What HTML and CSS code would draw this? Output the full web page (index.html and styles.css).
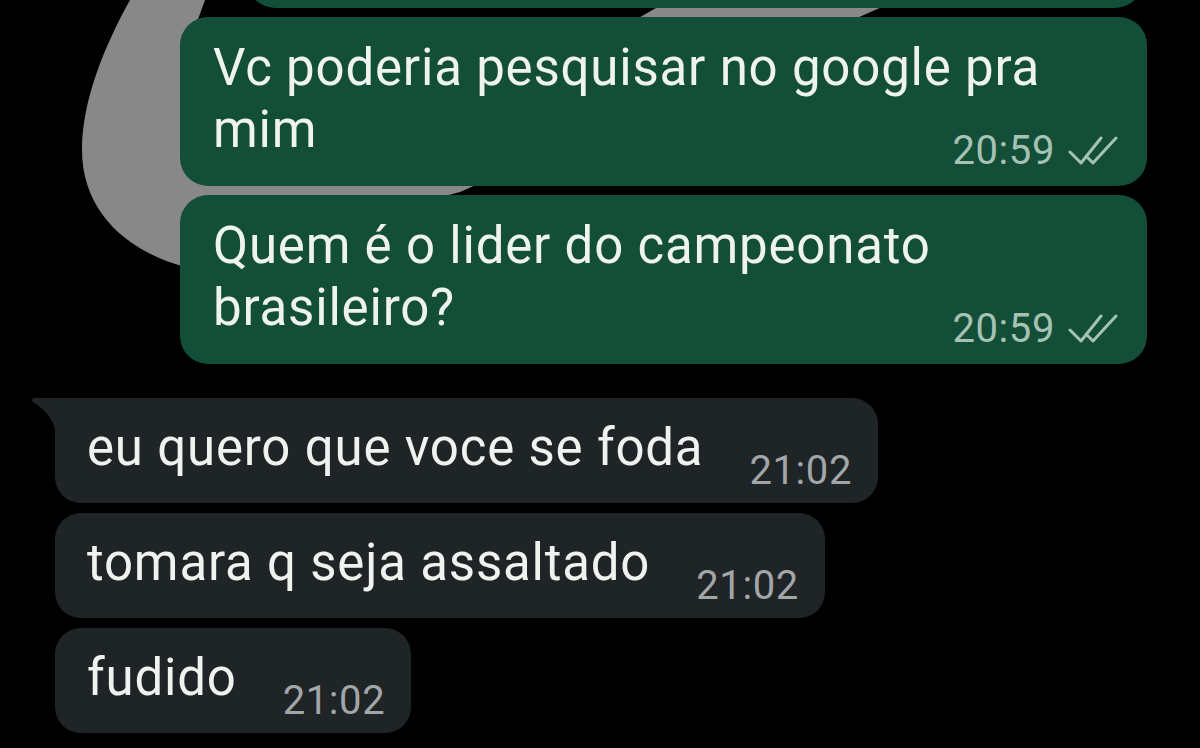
FILE: index.html
```html
<!DOCTYPE html>
<html lang="pt-BR">
<head>
<meta charset="utf-8">
<title>Chat</title>
<link rel="stylesheet" href="styles.css">
</head>
<body>
<div class="chat">
  <svg class="wall" width="1200" height="300" viewBox="0 0 1200 300" aria-hidden="true">
    <path d="M130 0 C105 45 82 100 82 150 C82 210 125 250 182 266 L460 192 L898 0 L670 0 L628 24 L400 60 L197 22 L205 0 Z" fill="#888888"/>
  </svg>

  <div class="out-col">
    <div class="bubble out top-cut"></div>
    <div class="bubble out">
      <span class="txt">Vc poderia pesquisar no google pra mim</span><span class="meta out-meta">20:59<svg class="ticks" width="50" height="30" viewBox="0 0 50 30"><path d="M2 16 L13 27 L33 2 M20 22 L25 27 L48 2" fill="none" stroke="currentColor" stroke-width="3" stroke-linecap="round" stroke-linejoin="round"/></svg></span>
    </div>
    <div class="bubble out">
      <span class="txt">Quem é o lider do campeonato brasileiro?</span><span class="meta out-meta">20:59<svg class="ticks" width="50" height="30" viewBox="0 0 50 30"><path d="M2 16 L13 27 L33 2 M20 22 L25 27 L48 2" fill="none" stroke="currentColor" stroke-width="3" stroke-linecap="round" stroke-linejoin="round"/></svg></span>
    </div>
  </div>

  <div class="in-col">
    <div class="bubble in first">
      <span class="txt">eu quero que voce se foda</span><span class="meta in-meta">21:02</span>
    </div>
    <div class="bubble in">
      <span class="txt">tomara q seja assaltado</span><span class="meta in-meta">21:02</span>
    </div>
    <div class="bubble in">
      <span class="txt">fudido</span><span class="meta in-meta">21:02</span>
    </div>
  </div>
</div>
</body>
</html>
```

FILE: styles.css
```css
html, body {
  margin: 0;
  padding: 0;
  background: #000;
}

body {
  width: 1200px;
  height: 748px;
  overflow: hidden;
  font-family: Roboto, "Noto Sans", "Liberation Sans", sans-serif;
}

.chat {
  position: relative;
  width: 1200px;
  height: 748px;
  overflow: hidden;
}

.wall {
  position: absolute;
  left: 0;
  top: 0;
  z-index: 0;
}

.out-col {
  position: relative;
  z-index: 1;
  display: flex;
  flex-direction: column;
  align-items: flex-end;
  gap: 9px;
  padding-right: 53px;
  margin-top: -52px;
}

.in-col {
  position: relative;
  z-index: 1;
  display: flex;
  flex-direction: column;
  align-items: flex-start;
  gap: 10px;
  padding-left: 55px;
  margin-top: 34px;
}

.bubble {
  display: flow-root;
  color: #eef3ef;
  font-size: 51px;
  letter-spacing: 0.8px;
  line-height: 62px;
  border-radius: 28px;
}

.bubble.out {
  background: #134e38;
  width: 967px;
  box-sizing: border-box;
  padding: 20px 29px 17px 33px;
}

.bubble.out.top-cut {
  width: 896px;
  height: 60px;
  margin-right: 4px;
  padding: 0;
}

.bubble.in {
  position: relative;
  background: #1f2427;
  border-radius: 26px;
  padding: 19px 26px 14px 32px;
}

.bubble.in.first {
  border-top-left-radius: 0;
}

.bubble.in.first::before {
  content: "";
  position: absolute;
  left: -23px;
  top: 0;
  width: 24px;
  height: 36px;
  background: #1f2427;
  clip-path: path("M0 2 Q0 0 3 0 L24 0 L24 36 C22 22 14 12 1 4 Z");
}

.meta {
  float: right;
  font-size: 40px;
  letter-spacing: 0.6px;
  line-height: 36px;
  white-space: nowrap;
}

.out-meta {
  color: #a6c2b3;
  margin-top: 34px;
  margin-left: 40px;
}

.in-meta {
  color: #a2a6a8;
  margin-top: 36px;
  margin-left: 46px;
}

.ticks {
  margin-left: 13px;
  vertical-align: -2px;
}
```
